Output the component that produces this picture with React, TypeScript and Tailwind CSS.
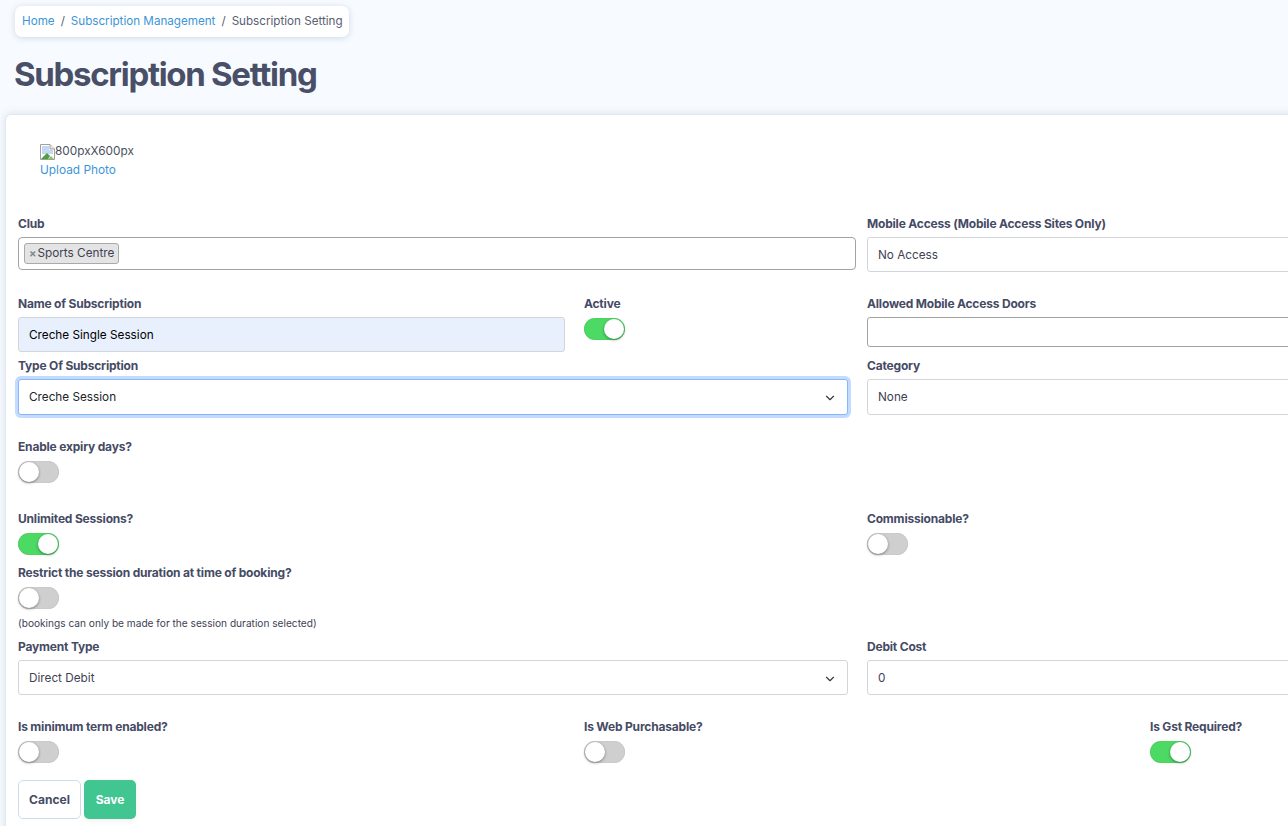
import { ChevronDown } from "lucide-react";

const labelClass = "block h-[14px] text-[12px] leading-[14px] font-bold text-[#454b65] tracking-[-0.19px]";
const fieldClass =
  "flex h-[35px] items-center rounded-[3px] border border-[#d2d6da] bg-white px-[10px] pt-[2px] text-[11.75px] text-[#3f4254]";

const Toggle = (props: { on?: boolean }) => (
  <div
    className={
      "relative h-[22px] w-[41px] rounded-full shadow-[inset_0_0_1px_rgba(0,0,0,0.25)] " +
      (props.on ? "bg-[#4cd964]" : "bg-[#cfcfcf]")
    }
  >
    <div
      className={
        "absolute top-[1px] h-[20px] w-[20px] rounded-full bg-white shadow-[0_1px_3px_rgba(0,0,0,0.4)] " +
        (props.on ? "right-[1px]" : "left-[1px]")
      }
    />
  </div>
);

const BrokenImage = () => (
  <svg width="15" height="16" viewBox="0 0 15 16" className="shrink-0">
    <path d="M0.5 0.5H10L14.5 5V15.5H0.5Z" fill="#fff" stroke="#a0a0a0" />
    <path d="M10 0.5V5H14.5" fill="#e8e8e8" stroke="#a0a0a0" />
    <path d="M2 2H9V6H13V10H2Z" fill="#c4d8f6" />
    <path d="M1 15L7 9L10 12L8 15Z" fill="#4f9e3a" />
    <path d="M8 15L11 12L14 15Z" fill="#8cc66d" />
  </svg>
);

export default function App() {
  return (
    <div className="h-[826px] w-[1288px] overflow-hidden bg-[#f7fbff] font-['Inter',sans-serif]">
      <div className="px-[14px] pt-[6px]">
        <div className="ml-[1px] inline-flex h-[31px] items-center rounded-[7px] bg-white pr-[6px] pl-[7px] text-[11.65px] shadow-[0_1px_6px_rgba(90,110,160,0.25)]">
          <span className="text-[#3d95d8]">Home</span>
          <span className="mx-[6px] text-[#5a6072]">/</span>
          <span className="text-[#3d95d8]">Subscription Management</span>
          <span className="mx-[6px] text-[#5a6072]">/</span>
          <span className="text-[#5a6072]">Subscription Setting</span>
        </div>
        <h1 className="mt-[16px] h-[42px] text-[33px] leading-[42px] font-bold tracking-[-1.3px] text-[#4a4f68]">
          Subscription Setting
        </h1>
      </div>

      <div className="mt-[19px] ml-[5px] h-[760px] w-[1720px] rounded-tl-[6px] border-t border-l border-[#e3e9f3] bg-white pt-[27px] pl-[12px] shadow-[0_0_8px_rgba(90,110,160,0.2)]">
        <div className="pl-[22px]">
          <div className="flex h-[18px] items-center pt-[1px] text-[11.8px] text-[#4a4f5c]">
            <BrokenImage />
            800pxX600px
          </div>
          <div className="mt-[2px] text-[11.85px] leading-[16px] text-[#3d95d8]">Upload Photo</div>
        </div>

        <div className="mt-[39px] grid grid-cols-[849px_849px]">
          <div>
            <div className={labelClass}>Club</div>
            <div className="mt-[6px] flex h-[33px] w-[838px] items-center rounded-[4px] border border-[#a3a3a3] bg-white px-[5px]">
              <div className="flex h-[21px] items-center rounded-[3px] border border-[#aaaaaa] bg-[#e4e4e4] pr-[4px] pl-[4px] text-[11.75px] text-[#3f4254]">
                <span className="mr-[1px] text-[11px] font-bold text-[#888888]">×</span>
                Sports Centre
              </div>
            </div>
          </div>
          <div>
            <div className={labelClass}>Mobile Access (Mobile Access Sites Only)</div>
            <div className={fieldClass + " mt-[6px]"}>No Access</div>
          </div>
        </div>

        <div className="mt-[25px] grid grid-cols-[566px_283px_849px]">
          <div>
            <div className={labelClass}>Name of Subscription</div>
            <div className="mt-[6px] flex h-[35px] w-[547px] items-center rounded-[3px] border border-[#d2d6da] bg-[#e8f0fe] px-[10px] pt-[2px] text-[11.75px] text-black">
              Creche Single Session
            </div>
          </div>
          <div>
            <div className={labelClass}>Active</div>
            <div className="mt-[7px]">
              <Toggle on />
            </div>
          </div>
          <div>
            <div className={labelClass}>Allowed Mobile Access Doors</div>
            <div className="mt-[6px] h-[30px] rounded-[3px] border border-[#a3a3a3] bg-white" />
          </div>
        </div>

        <div className="mt-[7px] grid grid-cols-[849px_849px]">
          <div>
            <div className={labelClass}>Type Of Subscription</div>
            <div className="mt-[6px] flex h-[36px] w-[830px] items-center justify-between rounded-[3px] border border-[#86b7fe] bg-white px-[10px] pt-[1px] text-[11.75px] text-[#212529] shadow-[0_0_0_3px_#c2dbfe]">
              Creche Session
              <ChevronDown size={14} className="text-[#343a40]" />
            </div>
          </div>
          <div>
            <div className={labelClass}>Category</div>
            <div className={fieldClass + " mt-[6px] h-[36px]"}>None</div>
          </div>
        </div>

        <div className="mt-[25px]">
          <div className={labelClass}>Enable expiry days?</div>
          <div className="mt-[7px]">
            <Toggle />
          </div>
        </div>

        <div className="mt-[29px] grid grid-cols-[849px_849px]">
          <div>
            <div className={labelClass}>Unlimited Sessions?</div>
            <div className="mt-[7px]">
              <Toggle on />
            </div>
          </div>
          <div>
            <div className={labelClass}>Commissionable?</div>
            <div className="mt-[7px]">
              <Toggle />
            </div>
          </div>
        </div>

        <div className="mt-[11px]">
          <div className={labelClass}>Restrict the session duration at time of booking?</div>
          <div className="mt-[7px]">
            <Toggle />
          </div>
          <div className="mt-[8px] h-[13px] text-[10.15px] leading-[13px] text-[#3f4254]">
            (bookings can only be made for the session duration selected)
          </div>
        </div>

        <div className="mt-[10px] grid grid-cols-[849px_849px]">
          <div>
            <div className={labelClass}>Payment Type</div>
            <div className={fieldClass + " mt-[6px] w-[830px] justify-between"}>
              Direct Debit
              <ChevronDown size={14} className="text-[#343a40]" />
            </div>
          </div>
          <div>
            <div className={labelClass}>Debit Cost</div>
            <div className={fieldClass + " mt-[6px]"}>0</div>
          </div>
        </div>

        <div className="mt-[25px] grid grid-cols-[566px_566px_566px]">
          <div>
            <div className={labelClass}>Is minimum term enabled?</div>
            <div className="mt-[7px]">
              <Toggle />
            </div>
          </div>
          <div>
            <div className={labelClass}>Is Web Purchasable?</div>
            <div className="mt-[7px]">
              <Toggle />
            </div>
          </div>
          <div>
            <div className={labelClass}>Is Gst Required?</div>
            <div className="mt-[7px]">
              <Toggle on />
            </div>
          </div>
        </div>

        <div className="mt-[17px] flex gap-[3px]">
          <div className="flex h-[39px] w-[63px] items-center justify-center rounded-[5px] border border-[#cfdde8] bg-white text-[12px] font-bold text-[#454b65]">
            Cancel
          </div>
          <div className="flex h-[39px] w-[52px] items-center justify-center rounded-[5px] bg-[#41c591] text-[12px] font-bold text-white shadow-[0_2px_6px_rgba(0,0,0,0.06)]">
            Save
          </div>
        </div>
      </div>
    </div>
  );
}
